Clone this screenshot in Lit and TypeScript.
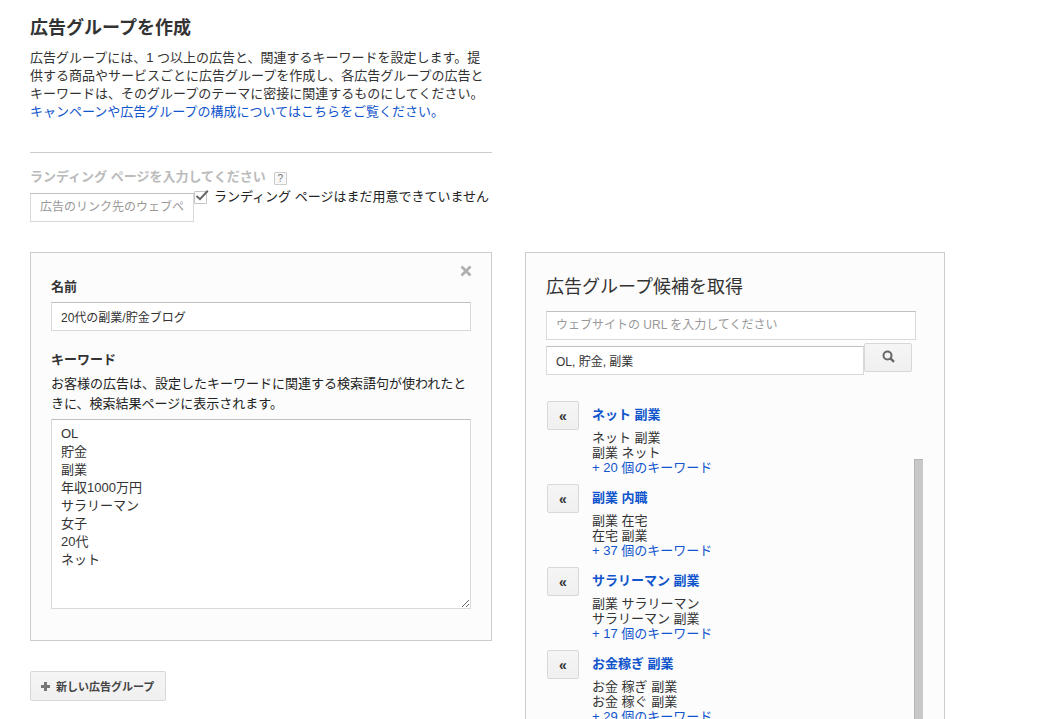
import { LitElement, html, css, svg } from "lit";
import { customElement, property, state } from "lit/decorators.js";

interface Suggestion {
  title: string;
  keywords: string[];
  more: number;
}

const SUGGESTIONS: Suggestion[] = [
  { title: "ネット 副業", keywords: ["ネット 副業", "副業 ネット"], more: 20 },
  { title: "副業 内職", keywords: ["副業 在宅", "在宅 副業"], more: 37 },
  { title: "サラリーマン 副業", keywords: ["副業 サラリーマン", "サラリーマン 副業"], more: 17 },
  { title: "お金稼ぎ 副業", keywords: ["お金 稼ぎ 副業", "お金 稼ぐ 副業"], more: 29 },
];

const KEYWORDS = ["OL", "貯金", "副業", "年収1000万円", "サラリーマン", "女子", "20代", "ネット"];

const shared = css`
  * {
    box-sizing: border-box;
  }
  h1,
  h2,
  h3,
  p,
  ul {
    margin: 0;
    padding: 0;
    list-style: none;
  }
  a {
    color: #15c;
    text-decoration: none;
  }
  button,
  input,
  textarea {
    font-family: inherit;
    color: inherit;
    margin: 0;
    outline: none;
  }
  .field {
    display: block;
    width: 100%;
    height: 29px;
    padding: 0 9px;
    border: 1px solid #d9d9d9;
    border-top-color: #c0c0c0;
    border-radius: 0;
    background: #fff;
    font-size: 12px;
  }
  .field::placeholder {
    color: #999;
    opacity: 1;
  }
  .field:placeholder-shown {
    padding-bottom: 2px;
  }
  .btn {
    display: flex;
    align-items: center;
    justify-content: center;
    padding: 0;
    border: 1px solid #d8d8d8;
    border-radius: 2px;
    background: linear-gradient(#f5f5f5, #f0f0f0);
    color: #444;
    font-weight: bold;
    cursor: pointer;
  }
  .panel {
    position: relative;
    border: 1px solid #ccc;
    background: #fcfcfc;
  }
`;

@customElement("landing-page-field")
class LandingPageField extends LitElement {
  @state() notReady = true;

  static styles = [
    shared,
    css`
      :host {
        display: block;
      }
      .caption {
        display: flex;
        align-items: center;
        gap: 8px;
        line-height: 18px;
        font-weight: bold;
        color: #bbb;
      }
      .help {
        width: 13px;
        height: 13px;
        margin-top: 2px;
        padding: 0;
        border: 1px solid #ccc;
        border-radius: 1px;
        background: #f8f8f8;
        color: #777;
        font-size: 10px;
        line-height: 11px;
        text-align: center;
      }
      .row {
        display: flex;
        align-items: flex-start;
      }
      .url {
        flex: none;
        width: 164px;
        margin-top: 7px;
      }
      .check {
        position: relative;
        display: flex;
        align-items: center;
        gap: 7px;
        margin-top: 2px;
        line-height: 18px;
        color: #222;
        white-space: nowrap;
      }
      .box {
        appearance: none;
        width: 13px;
        height: 13px;
        border: 1px solid #c6c6c6;
        border-radius: 1px;
        background: #fff;
      }
      .tick {
        position: absolute;
        left: 0;
        top: 0;
        pointer-events: none;
      }
    `,
  ];

  render() {
    return html`
      <div class="caption">
        <label for="url">ランディング ページを入力してください</label>
        <button class="help" type="button" aria-label="ヘルプ">?</button>
      </div>
      <div class="row">
        <input class="field url" id="url" type="text" placeholder="広告のリンク先のウェブページ" />
        <label class="check">
          <input
            class="box"
            type="checkbox"
            .checked=${this.notReady}
            @change=${(e: Event) => (this.notReady = (e.target as HTMLInputElement).checked)}
          />
          ${this.notReady
            ? html`<svg class="tick" width="16" height="16" viewBox="0 0 16 16" aria-hidden="true">
                ${svg`<path d="M2.5 8 L6 11.2 L13.8 2.8" fill="none" stroke="#666" stroke-width="2" />`}
              </svg>`
            : ""}
          <span>ランディング ページはまだ用意できていません</span>
        </label>
      </div>
    `;
  }
}

@customElement("ad-group-editor")
class AdGroupEditor extends LitElement {
  static styles = [
    shared,
    css`
      :host {
        display: block;
      }
      .panel {
        padding: 24px 20px 31px;
      }
      .close {
        position: absolute;
        top: 11px;
        right: 18px;
        width: 14px;
        height: 14px;
        padding: 0;
        border: 0;
        background: none;
        cursor: pointer;
      }
      .close svg {
        display: block;
      }
      .label {
        display: block;
        line-height: 20px;
        font-weight: bold;
      }
      .name {
        margin: 5px 0 19px;
      }
      .hint {
        margin: 4px 0 5px;
        line-height: 20px;
        color: #222;
      }
      .keywords {
        height: 190px;
        padding: 5px 9px;
        font-size: 13px;
        line-height: 18px;
        resize: both;
      }
    `,
  ];

  render() {
    return html`
      <section class="panel">
        <button class="close" type="button" aria-label="閉じる">
          <svg width="14" height="14" viewBox="0 0 14 14">
            <path d="M2.5 2.5 L11.5 11.5 M11.5 2.5 L2.5 11.5" stroke="#b0b0b0" stroke-width="2.8" />
          </svg>
        </button>
        <label class="label" for="name">名前</label>
        <input class="field name" id="name" type="text" value="20代の副業/貯金ブログ" />
        <label class="label" for="keywords">キーワード</label>
        <p class="hint">お客様の広告は、設定したキーワードに関連する検索語句が使われたときに、検索結果ページに表示されます。</p>
        <textarea class="field keywords" id="keywords" .value=${KEYWORDS.join("\n")}></textarea>
      </section>
    `;
  }
}

@customElement("suggestion-item")
class SuggestionItem extends LitElement {
  @property({ attribute: false }) item!: Suggestion;

  static styles = [
    shared,
    css`
      :host {
        display: grid;
        grid-template-columns: 32px 1fr;
        column-gap: 13px;
        align-items: start;
      }
      .add {
        height: 29px;
        padding-top: 1px;
        font-size: 14px;
        color: #333;
      }
      .title {
        margin: 4px 0 5px;
        font-size: 13px;
        line-height: 20px;
      }
      .line {
        line-height: 15px;
      }
    `,
  ];

  render() {
    const { title, keywords, more } = this.item;
    return html`
      <button class="btn add" type="button" aria-label="追加">«</button>
      <div>
        <h3 class="title"><a href="#">${title}</a></h3>
        <ul>
          ${keywords.map((k) => html`<li class="line">${k}</li>`)}
          <li class="line"><a href="#">+ ${more} 個のキーワード</a></li>
        </ul>
      </div>
    `;
  }
}

@customElement("suggestion-panel")
class SuggestionPanel extends LitElement {
  static styles = [
    shared,
    css`
      :host {
        display: grid;
      }
      .panel {
        padding: 22px 20px 0;
      }
      .heading {
        margin-bottom: 12px;
        font-size: 18px;
        line-height: 24px;
        font-weight: normal;
      }
      .form {
        padding-right: 8px;
      }
      .row {
        display: flex;
        align-items: flex-start;
        padding-right: 4px;
        margin-top: 3px;
      }
      .query {
        flex: 1;
        min-width: 0;
        margin-top: 3px;
      }
      .search {
        flex: none;
        width: 48px;
        height: 29px;
        padding-bottom: 3px;
      }
      .results {
        display: flex;
        margin-top: 26px;
        padding: 0 1px;
      }
      .items {
        flex: 1;
        display: flex;
        flex-direction: column;
        gap: 9px;
        padding-bottom: 20px;
      }
      .thumb {
        width: 9px;
        margin-top: 58px;
        border: 1px solid #b5b5b5;
        border-right: 0;
        background: #c8c8c8;
      }
    `,
  ];

  render() {
    return html`
      <section class="panel">
        <h2 class="heading">広告グループ候補を取得</h2>
        <form class="form" @submit=${(e: Event) => e.preventDefault()}>
          <input class="field" type="text" aria-label="ウェブサイトの URL" placeholder="ウェブサイトの URL を入力してください" />
          <div class="row">
            <input class="field query" type="text" aria-label="キーワード" value="OL, 貯金, 副業" />
            <button class="btn search" type="submit" aria-label="検索">
              <svg width="13" height="13" viewBox="0 0 13 13">
                <circle cx="5.5" cy="5.5" r="4" fill="none" stroke="#666" stroke-width="2" />
                <path d="M8.2 8.2 L12 11.8" stroke="#666" stroke-width="2.4" />
              </svg>
            </button>
          </div>
        </form>
        <div class="results">
          <div class="items">
            ${SUGGESTIONS.map((s) => html`<suggestion-item .item=${s}></suggestion-item>`)}
          </div>
          <div class="thumb"></div>
        </div>
      </section>
    `;
  }
}

@customElement("app-root")
class AppRoot extends LitElement {
  static styles = [
    shared,
    css`
      :host {
        display: block;
        height: 100vh;
        overflow: hidden;
        background: #fff;
        color: #333;
        font-family: "Liberation Sans", "Noto Sans CJK JP", sans-serif;
        font-size: 13px;
      }
      .page {
        padding: 16px 30px 0;
      }
      .intro {
        max-width: 462px;
        padding-bottom: 31px;
        margin-bottom: 15px;
        border-bottom: 1px solid #ccc;
      }
      .title {
        margin-bottom: 9px;
        font-size: 18px;
        line-height: 24px;
      }
      .lead {
        line-height: 18px;
      }
      .columns {
        display: grid;
        grid-template-columns: minmax(0, 462px) minmax(0, 420px);
        column-gap: 33px;
        margin-top: 30px;
      }
      .new {
        gap: 6px;
        height: 30px;
        margin-top: 30px;
        padding: 0 11px 0 10px;
        font-size: 11px;
      }
    `,
  ];

  render() {
    return html`
      <main class="page">
        <header class="intro">
          <h1 class="title">広告グループを作成</h1>
          <p class="lead">広告グループには、1 つ以上の広告と、関連するキーワードを設定します。提供する商品やサービスごとに広告グループを作成し、各広告グループの広告とキーワードは、そのグループのテーマに密接に関連するものにしてください。<a href="#">キャンペーンや広告グループの構成についてはこちらをご覧ください。</a></p>
        </header>
        <landing-page-field></landing-page-field>
        <div class="columns">
          <div>
            <ad-group-editor></ad-group-editor>
            <button class="btn new" type="button">
              <svg width="9" height="9" viewBox="0 0 9 9" aria-hidden="true">
                <path d="M3 0h3v3h3v3H6v3H3V6H0V3h3z" fill="#777" />
              </svg>
              新しい広告グループ
            </button>
          </div>
          <suggestion-panel></suggestion-panel>
        </div>
      </main>
    `;
  }
}
